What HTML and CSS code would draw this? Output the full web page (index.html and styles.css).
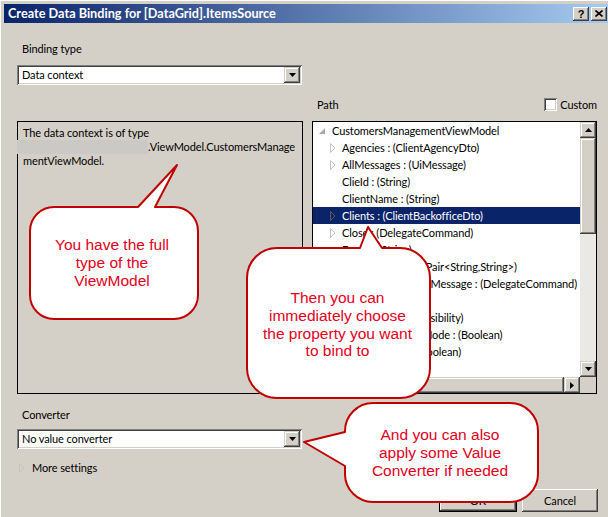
FILE: index.html
```html
<!DOCTYPE html>
<html>
<head>
<meta charset="utf-8">
<link rel="stylesheet" href="styles.css">
</head>
<body>
<div class="window">
  <div class="titlebar">
    <span class="title">Create Data Binding for [DataGrid].ItemsSource</span>
    <div class="tb-buttons">
      <span class="tbtn help">?</span>
      <span class="tbtn"><svg width="8" height="7" viewBox="0 0 8 7"><path d="M0.5 0.5 L7.5 6.5 M7.5 0.5 L0.5 6.5" stroke="#000" stroke-width="1.6"/></svg></span>
    </div>
  </div>
  <div class="content">
    <div class="label">Binding type</div>
    <div class="combo">
      <span class="combo-text">Data context</span>
      <span class="sbtn"><svg width="7" height="4" viewBox="0 0 7 4"><path d="M0 0 H7 L3.5 4 Z" fill="#000"/></svg></span>
    </div>

    <div class="cols path-row">
      <div></div>
      <div class="path-head">
        <span class="path-label">Path</span>
        <span class="custom"><span class="checkbox"></span>Custom</span>
      </div>
    </div>

    <div class="cols panels">
      <div class="info-box">
        <div class="info-line">The data context is of type</div>
        <div class="info-line"><span class="redacted"></span>.ViewModel.CustomersManage</div>
        <div class="info-line">mentViewModel.</div>
      </div>
      <div class="tree">
        <div class="tree-rows">
          <div class="row root"><span class="twisty"><svg width="6" height="6" viewBox="0 0 6 6"><path d="M6 0 V6 H0 Z" fill="#a8a8a8"/></svg></span>CustomersManagementViewModel</div>
          <div class="row child"><span class="twisty"><svg width="6" height="10" viewBox="0 0 6 10"><path d="M0.5 0.5 L5 5 L0.5 9.5 Z" fill="none" stroke="#c4c4c4"/></svg></span>Agencies : (ClientAgencyDto)</div>
          <div class="row child"><span class="twisty"><svg width="6" height="10" viewBox="0 0 6 10"><path d="M0.5 0.5 L5 5 L0.5 9.5 Z" fill="none" stroke="#c4c4c4"/></svg></span>AllMessages : (UiMessage)</div>
          <div class="row child"><span class="twisty"></span>ClieId : (String)</div>
          <div class="row child"><span class="twisty"></span>ClientName : (String)</div>
          <div class="row child selected"><span class="twisty"><svg width="6" height="10" viewBox="0 0 6 10"><path d="M0.5 0.5 L5 5 L0.5 9.5 Z" fill="none" stroke="#5a5a5a"/></svg></span>Clients : (ClientBackofficeDto)</div>
          <div class="row child"><span class="twisty"><svg width="6" height="10" viewBox="0 0 6 10"><path d="M0.5 0.5 L5 5 L0.5 9.5 Z" fill="none" stroke="#c4c4c4"/></svg></span>Close : (DelegateCommand)</div>
          <div class="row child"><span class="twisty"></span>Errors : (String)</div>
          <div class="row child"><span class="twisty"></span>Filters : (KeyValuePair&lt;String,String&gt;)</div>
          <div class="row child"><span class="twisty"></span>ShowConfirmationMessage : (DelegateCommand)</div>
          <div class="row child"><span class="twisty"></span>Id : (Int32)</div>
          <div class="row child"><span class="twisty"></span>ErrorsVisibility : (Visibility)</div>
          <div class="row child"><span class="twisty"></span>IsMultiSelectionsMode : (Boolean)</div>
          <div class="row child"><span class="twisty"></span>IsListModified : (Boolean)</div>
          <div class="row child"><span class="twisty"></span>IsValid : (Boolean)</div>
        </div>
        <div class="vscroll">
          <span class="sbtn"><svg width="7" height="4" viewBox="0 0 7 4"><path d="M0 4 H7 L3.5 0 Z" fill="#000"/></svg></span>
          <span class="thumb"></span>
          <span class="track"></span>
          <span class="sbtn"><svg width="7" height="4" viewBox="0 0 7 4"><path d="M0 0 H7 L3.5 4 Z" fill="#000"/></svg></span>
        </div>
        <div class="hscroll">
          <span class="sbtn"><svg width="4" height="7" viewBox="0 0 4 7"><path d="M4 0 V7 L0 3.5 Z" fill="#000"/></svg></span>
          <span class="hthumb"></span>
          <span class="sbtn"><svg width="4" height="7" viewBox="0 0 4 7"><path d="M0 0 V7 L4 3.5 Z" fill="#000"/></svg></span>
        </div>
        <div class="corner"></div>
      </div>
    </div>

    <div class="label label-conv">Converter</div>
    <div class="combo combo-conv">
      <span class="combo-text">No value converter</span>
      <span class="sbtn"><svg width="7" height="4" viewBox="0 0 7 4"><path d="M0 0 H7 L3.5 4 Z" fill="#000"/></svg></span>
    </div>
    <div class="more"><svg width="6" height="10" viewBox="0 0 6 10"><path d="M0.5 0.5 L5 5 L0.5 9.5 Z" fill="none" stroke="#c4c4c4"/></svg><span>More settings</span></div>
    <div class="buttons">
      <span class="btn default">OK</span>
      <span class="btn">Cancel</span>
    </div>
  </div>

  <svg class="callouts" width="608" height="517" viewBox="0 0 608 517">
    <path class="bubble" d="M54,207 L138,207 L177,165 L155,207 L174,207 A24,24 0 0 1 198,231 L198,295 A24,24 0 0 1 174,319 L54,319 A24,24 0 0 1 30,295 L30,231 A24,24 0 0 1 54,207 Z"/>
    <text class="bubble-text" x="112" y="249.5">You have the full</text>
    <text class="bubble-text" x="112" y="267.5">type of the</text>
    <text class="bubble-text" x="112" y="285.5">ViewModel</text>

    <path class="bubble" d="M277,248 L360,248 L368,227 L382,248 L400,248 A30,30 0 0 1 430,278 L430,368 A30,30 0 0 1 400,398 L277,398 A30,30 0 0 1 247,368 L247,278 A30,30 0 0 1 277,248 Z"/>
    <text class="bubble-text" x="337.5" y="302.5">Then you can</text>
    <text class="bubble-text" x="337.5" y="320.5">immediately choose</text>
    <text class="bubble-text" x="337.5" y="338.5">the property you want</text>
    <text class="bubble-text" x="337.5" y="356">to bind to</text>

    <path class="bubble" d="M373,403 L510,403 A28,28 0 0 1 538,431 L538,474 A28,28 0 0 1 510,502 L373,502 A28,28 0 0 1 345,474 L345,466 L304,442 L345,432 L345,431 A28,28 0 0 1 373,403 Z"/>
    <text class="bubble-text" x="440" y="439.5">And you can also</text>
    <text class="bubble-text" x="440" y="457.5">apply some Value</text>
    <text class="bubble-text" x="440" y="475.5">Converter if needed</text>
  </svg>
</div>
</body>
</html>
```

FILE: styles.css
```css
* { box-sizing: border-box; }

html, body {
  margin: 0;
  padding: 0;
}

body {
  width: 608px;
  height: 517px;
  overflow: hidden;
  background: #d4d0c8;
  font-family: Lato, "Liberation Sans", sans-serif;
  font-size: 11px;
  letter-spacing: -0.1px;
  color: #000;
}

.window {
  position: relative;
  width: 608px;
  height: 517px;
  padding: 4px 0 0 4px;
  background: #d4d0c8;
  box-shadow: inset 1px 1px 0 #ffffff;
}

/* title bar */
.titlebar {
  height: 19px;
  display: flex;
  align-items: center;
  justify-content: space-between;
  padding-left: 4px;
  background: linear-gradient(to right, #0a246a, #a6caf0);
  color: #fff;
}

.title {
  font-weight: bold;
  font-size: 12.7px;
  letter-spacing: 0;
  line-height: 19px;
}

.tb-buttons {
  display: flex;
  gap: 2px;
  margin-right: 1px;
}

.tbtn {
  width: 16px;
  height: 14px;
  display: flex;
  align-items: center;
  justify-content: center;
  background: #d4d0c8;
  box-shadow: inset -1px -1px 0 #404040, inset 1px 1px 0 #ffffff, inset -2px -2px 0 #808080;
  color: #000;
}

.help {
  font-family: "Liberation Sans", sans-serif;
  font-weight: bold;
  font-size: 11px;
  line-height: 14px;
}

/* content */
.content {
  padding-left: 13px;
  display: flex;
  flex-direction: column;
}

.label {
  height: 15px;
  line-height: 15px;
  padding-left: 5px;
  margin-top: 18px;
}

.label-conv {
  margin-top: 13px;
}

.combo {
  width: 285px;
  height: 20px;
  margin-top: 9px;
  display: flex;
  align-items: center;
  justify-content: space-between;
  background: #fff;
  box-shadow: inset 1px 1px 0 #808080, inset -1px -1px 0 #ffffff, inset 2px 2px 0 #404040, inset -2px -2px 0 #d4d0c8;
  padding: 2px;
}

.combo-conv {
  margin-top: 7px;
}

.combo-text {
  padding-left: 3px;
  line-height: 16px;
}

.sbtn {
  width: 16px;
  height: 16px;
  flex: none;
  display: flex;
  align-items: center;
  justify-content: center;
  background: #d4d0c8;
  box-shadow: inset -1px -1px 0 #404040, inset 1px 1px 0 #d4d0c8, inset -2px -2px 0 #808080, inset 2px 2px 0 #ffffff;
}

.cols {
  display: grid;
  grid-template-columns: 286px 285px;
  column-gap: 9px;
}

.path-row {
  margin-top: 12px;
  height: 15px;
}

.path-head {
  display: flex;
  align-items: center;
  justify-content: space-between;
  line-height: 15px;
}

.path-label {
  padding-left: 5px;
}

.custom {
  display: flex;
  align-items: center;
  gap: 3px;
}

.checkbox {
  width: 13px;
  height: 13px;
  background: #fff;
  box-shadow: inset 1px 1px 0 #808080, inset -1px -1px 0 #ffffff, inset 2px 2px 0 #404040, inset -2px -2px 0 #d4d0c8;
}

.panels {
  margin-top: 9px;
  height: 273px;
}

.info-box {
  border: 1px solid #000;
  padding: 4px 5px;
  line-height: 14px;
}

.info-line {
  height: 14px;
  white-space: nowrap;
  display: flex;
  align-items: center;
}

.redacted {
  display: inline-block;
  width: 131px;
  height: 14px;
  margin-left: -6px;
  background: #cbc9c6;
  filter: blur(0.6px);
}

/* tree */
.tree {
  border: 1px solid #000;
  background: #fff;
  display: grid;
  grid-template-columns: 267px 16px;
  grid-template-rows: 255px 16px;
}

.tree-rows {
  overflow: hidden;
}

.row {
  height: 17px;
  display: flex;
  align-items: center;
  white-space: nowrap;
}

.row.root {
  padding-left: 6px;
}

.row.child {
  padding-left: 17px;
}

.twisty {
  width: 13px;
  flex: none;
  display: flex;
  align-items: center;
}

.row.child .twisty {
  width: 12px;
}

.row.selected {
  background: #0a246a;
  color: #fff;
}

.vscroll {
  display: flex;
  flex-direction: column;
}

.thumb {
  height: 96px;
  background: #d4d0c8;
  box-shadow: inset -1px -1px 0 #404040, inset 1px 1px 0 #d4d0c8, inset -2px -2px 0 #808080, inset 2px 2px 0 #ffffff;
}

.track {
  flex: 1;
  background: #ebe9e5;
}

.hscroll {
  display: flex;
}

.hthumb {
  flex: 1;
  background: #d4d0c8;
  box-shadow: inset -1px -1px 0 #404040, inset 1px 1px 0 #d4d0c8, inset -2px -2px 0 #808080, inset 2px 2px 0 #ffffff;
}

.corner {
  background: #d4d0c8;
}

/* bottom */
.more {
  margin-top: 11px;
  height: 15px;
  display: flex;
  align-items: center;
  padding-left: 2px;
  gap: 7px;
}

.buttons {
  margin-top: 14px;
  display: flex;
  justify-content: flex-end;
  gap: 5px;
  padding-right: 10px;
}

.btn {
  width: 76px;
  height: 23px;
  display: flex;
  align-items: center;
  justify-content: center;
  background: #d4d0c8;
  box-shadow: inset -1px -1px 0 #404040, inset 1px 1px 0 #ffffff, inset -2px -2px 0 #808080;
}

.btn.default {
  width: 78px;
  border: 1px solid #000;
}

/* callouts */
.callouts {
  position: absolute;
  left: 0;
  top: 0;
  pointer-events: none;
}

.bubble {
  fill: #ffffff;
  stroke: #c00000;
  stroke-width: 2;
  stroke-linejoin: round;
}

.bubble-text {
  font-family: "Liberation Sans", Arial, sans-serif;
  font-size: 15.5px;
  letter-spacing: 0;
  fill: #e3001b;
  text-anchor: middle;
}
```
